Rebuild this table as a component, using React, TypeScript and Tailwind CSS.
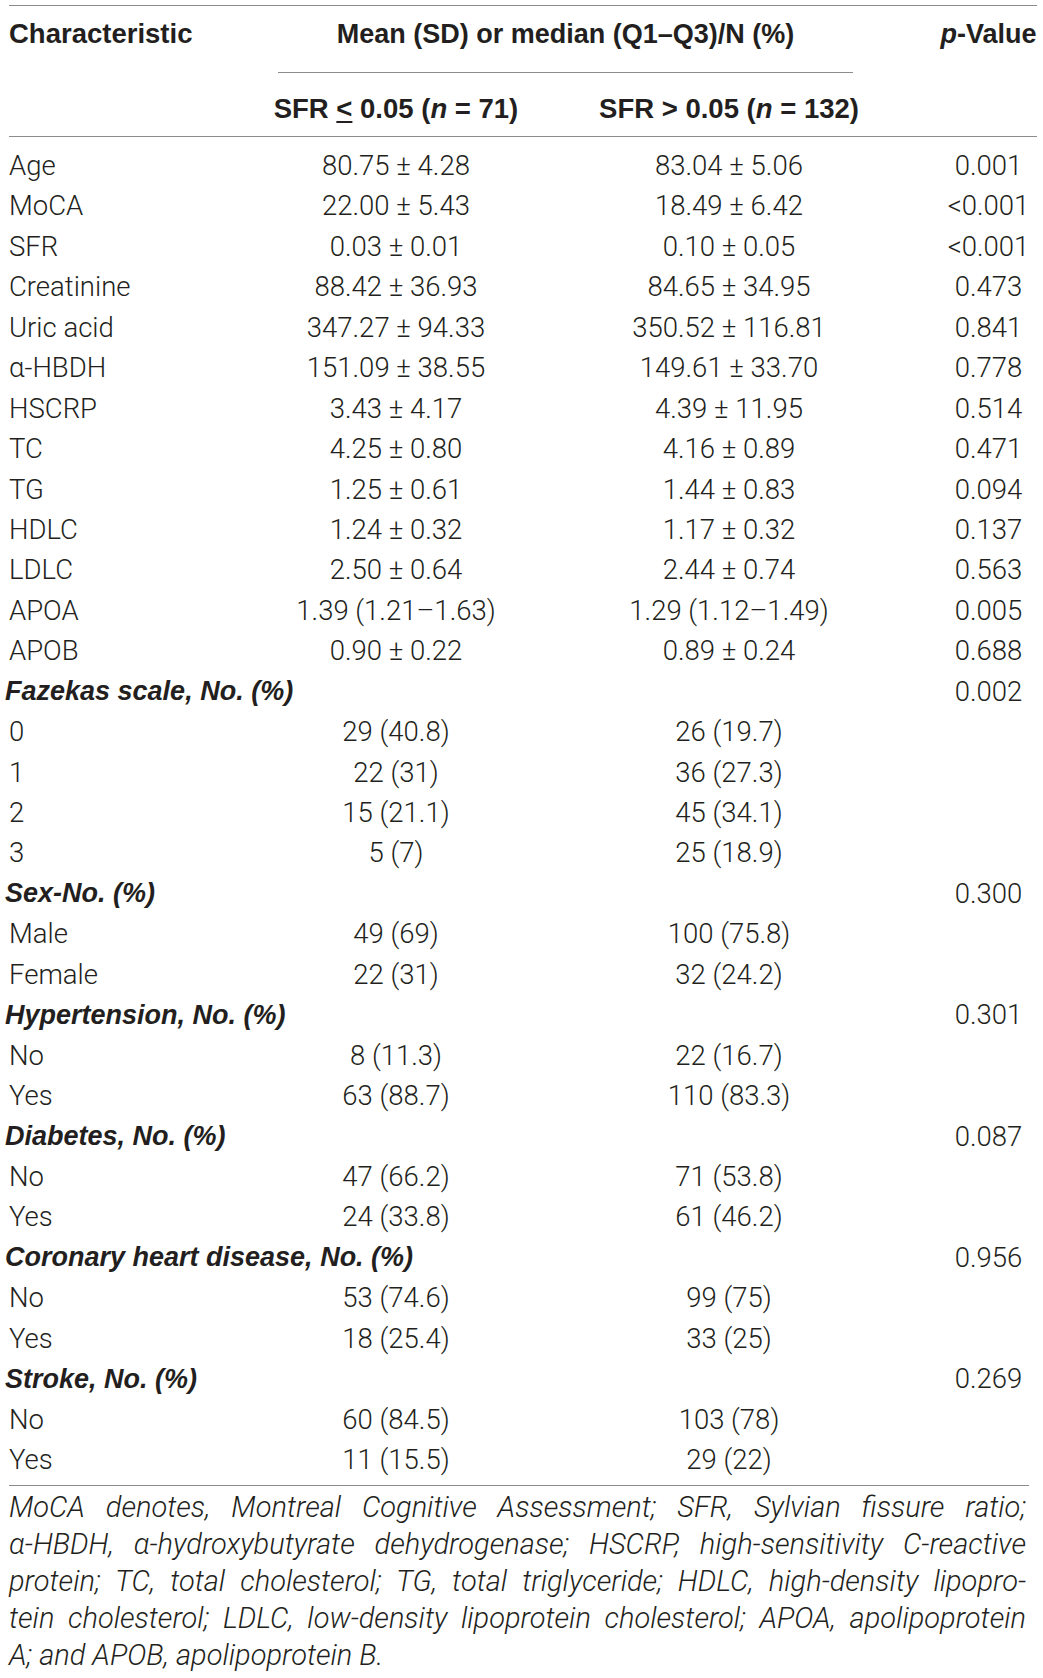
import React from "react";

type Row =
  | { kind: "row"; label: string; a: string; b: string; p?: string }
  | { kind: "section"; label: string; p: string };

const rows: Row[] = [
  { kind: "row", label: "Age", a: "80.75 ± 4.28", b: "83.04 ± 5.06", p: "0.001" },
  { kind: "row", label: "MoCA", a: "22.00 ± 5.43", b: "18.49 ± 6.42", p: "<0.001" },
  { kind: "row", label: "SFR", a: "0.03 ± 0.01", b: "0.10 ± 0.05", p: "<0.001" },
  { kind: "row", label: "Creatinine", a: "88.42 ± 36.93", b: "84.65 ± 34.95", p: "0.473" },
  { kind: "row", label: "Uric acid", a: "347.27 ± 94.33", b: "350.52 ± 116.81", p: "0.841" },
  { kind: "row", label: "α-HBDH", a: "151.09 ± 38.55", b: "149.61 ± 33.70", p: "0.778" },
  { kind: "row", label: "HSCRP", a: "3.43 ± 4.17", b: "4.39 ± 11.95", p: "0.514" },
  { kind: "row", label: "TC", a: "4.25 ± 0.80", b: "4.16 ± 0.89", p: "0.471" },
  { kind: "row", label: "TG", a: "1.25 ± 0.61", b: "1.44 ± 0.83", p: "0.094" },
  { kind: "row", label: "HDLC", a: "1.24 ± 0.32", b: "1.17 ± 0.32", p: "0.137" },
  { kind: "row", label: "LDLC", a: "2.50 ± 0.64", b: "2.44 ± 0.74", p: "0.563" },
  { kind: "row", label: "APOA", a: "1.39 (1.21–1.63)", b: "1.29 (1.12–1.49)", p: "0.005" },
  { kind: "row", label: "APOB", a: "0.90 ± 0.22", b: "0.89 ± 0.24", p: "0.688" },
  { kind: "section", label: "Fazekas scale, No. (%)", p: "0.002" },
  { kind: "row", label: "0", a: "29 (40.8)", b: "26 (19.7)" },
  { kind: "row", label: "1", a: "22 (31)", b: "36 (27.3)" },
  { kind: "row", label: "2", a: "15 (21.1)", b: "45 (34.1)" },
  { kind: "row", label: "3", a: "5 (7)", b: "25 (18.9)" },
  { kind: "section", label: "Sex-No. (%)", p: "0.300" },
  { kind: "row", label: "Male", a: "49 (69)", b: "100 (75.8)" },
  { kind: "row", label: "Female", a: "22 (31)", b: "32 (24.2)" },
  { kind: "section", label: "Hypertension, No. (%)", p: "0.301" },
  { kind: "row", label: "No", a: "8 (11.3)", b: "22 (16.7)" },
  { kind: "row", label: "Yes", a: "63 (88.7)", b: "110 (83.3)" },
  { kind: "section", label: "Diabetes, No. (%)", p: "0.087" },
  { kind: "row", label: "No", a: "47 (66.2)", b: "71 (53.8)" },
  { kind: "row", label: "Yes", a: "24 (33.8)", b: "61 (46.2)" },
  { kind: "section", label: "Coronary heart disease, No. (%)", p: "0.956" },
  { kind: "row", label: "No", a: "53 (74.6)", b: "99 (75)" },
  { kind: "row", label: "Yes", a: "18 (25.4)", b: "33 (25)" },
  { kind: "section", label: "Stroke, No. (%)", p: "0.269" },
  { kind: "row", label: "No", a: "60 (84.5)", b: "103 (78)" },
  { kind: "row", label: "Yes", a: "11 (15.5)", b: "29 (22)" },
];

const footLines = [
  "MoCA denotes, Montreal Cognitive Assessment; SFR, Sylvian fissure ratio;",
  "α-HBDH, α-hydroxybutyrate dehydrogenase; HSCRP, high-sensitivity C-reactive",
  "protein; TC, total cholesterol; TG, total triglyceride; HDLC, high-density lipopro-",
  "tein cholesterol; LDLC, low-density lipoprotein cholesterol; APOA, apolipoprotein",
];

const grid = "grid grid-cols-[268px_256px_410px_109px]";

export default function App() {
  return (
    <div
      className="w-[1043px] h-[1678px] bg-white text-[#231f20] overflow-hidden"
      style={{ fontFamily: "Roboto, 'Liberation Sans', sans-serif" }}
    >
      <div className="h-[5px]" />
      <div className="ml-[9px] w-[1028px] h-px bg-[#8c8c8c]" />
      {/* header row 1 */}
      <div className={`${grid} h-[66px] pb-[10px] items-center font-['Liberation_Sans',sans-serif] font-bold text-[27px]`}>
        <div className="pl-[9px] whitespace-nowrap text-[27.5px]">Characteristic</div>
        <div className="col-span-2 flex">
          <div className="ml-[10px] w-[575px] text-center whitespace-nowrap">
            Mean (SD) or median (Q1–Q3)/N (%)
          </div>
        </div>
        <div className="text-center whitespace-nowrap">
          <span className="italic">p</span>-Value
        </div>
      </div>
      <div className="ml-[278px] w-[575px] h-px bg-[#8c8c8c]" />
      {/* header row 2 */}
      <div className={`${grid} h-[63px] pt-[9px] items-center font-['Liberation_Sans',sans-serif] font-bold text-[27.5px]`}>
        <div />
        <div className="text-center whitespace-nowrap">
          SFR <span className="underline underline-offset-[3px] decoration-[1.5px]">&lt;</span> 0.05 (<span className="italic">n</span> = 71)
        </div>
        <div className="text-center whitespace-nowrap">
          SFR &gt; 0.05 (<span className="italic">n</span> = 132)
        </div>
        <div />
      </div>
      <div className="ml-[9px] w-[1028px] h-px bg-[#8c8c8c]" />
      {/* body */}
      <div className="pt-[8px] pb-[6px] font-light text-[27.5px]">
        {rows.map((r, i) =>
          r.kind === "row" ? (
            <div key={i} className={`${grid} h-[40.45px] items-center`}>
              <div className="pl-[9px] whitespace-nowrap">{r.label}</div>
              <div className="text-center whitespace-nowrap">{r.a}</div>
              <div className="text-center whitespace-nowrap">{r.b}</div>
              <div className="text-center whitespace-nowrap">{r.p ?? ""}</div>
            </div>
          ) : (
            <div key={i} className={`${grid} h-[40.45px] items-center`}>
              <div className="col-span-3 pl-[5px] whitespace-nowrap font-['Liberation_Sans',sans-serif] font-bold italic text-[27px]">
                {r.label}
              </div>
              <div className="text-center">{r.p}</div>
            </div>
          )
        )}
      </div>
      <div className="ml-[9px] w-[1020px] h-px bg-[#8c8c8c]" />
      {/* footnote */}
      <div className="ml-[9px] w-[1017px] pt-[3px] text-[29px] leading-[37px] italic font-light">
        {footLines.map((l, i) => (
          <div key={i} className="text-justify [text-align-last:justify]">
            {l}
          </div>
        ))}
        <div>A; and APOB, apolipoprotein B.</div>
      </div>
    </div>
  );
}
